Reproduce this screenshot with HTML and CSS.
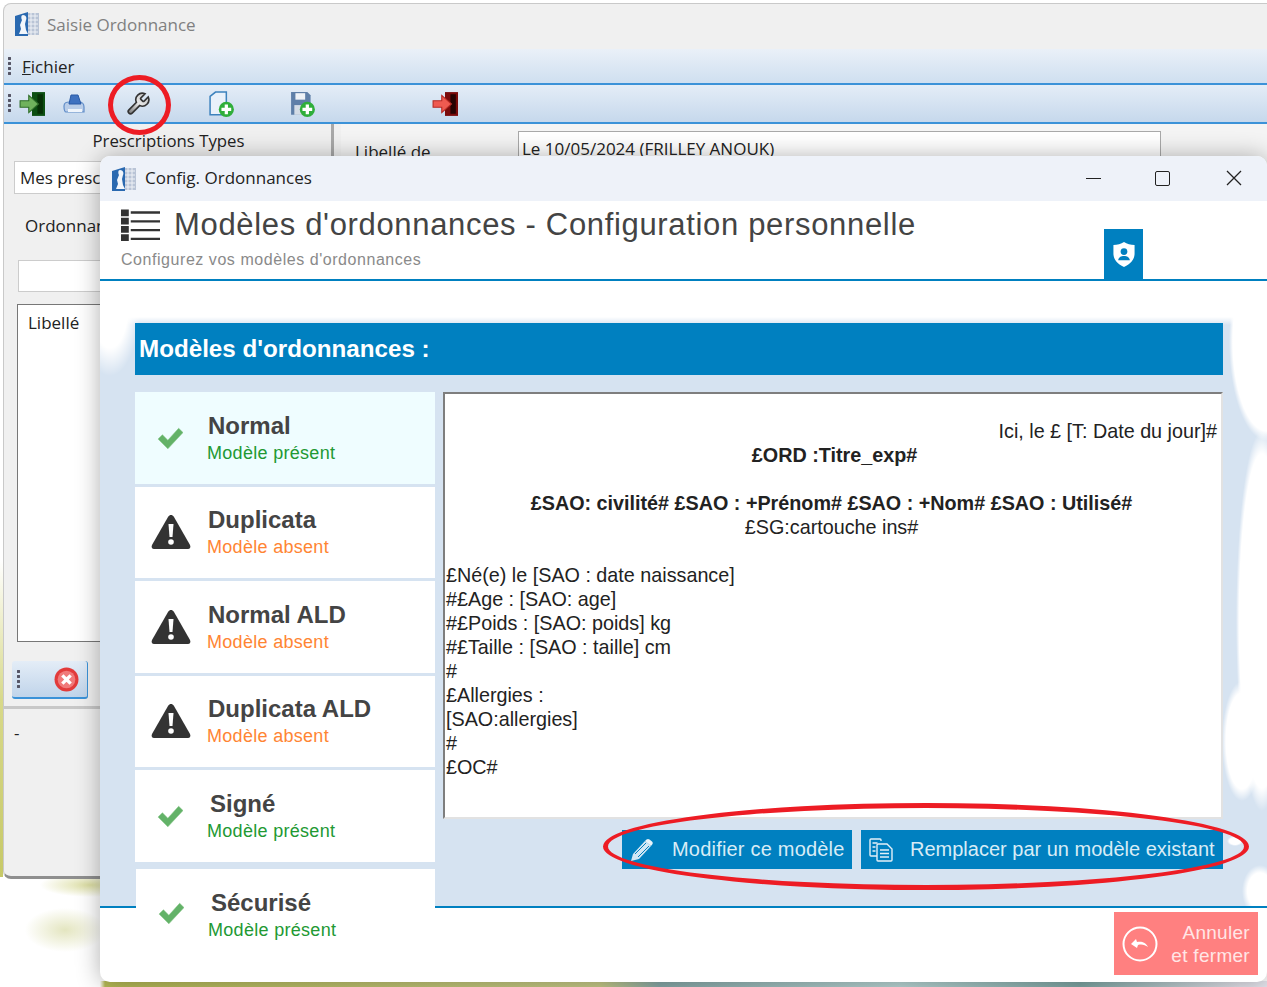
FILE: index.html
```html
<!DOCTYPE html>
<html lang="fr">
<head>
<meta charset="utf-8">
<title>Config. Ordonnances</title>
<link rel="stylesheet" href="styles.css">
</head>
<body>
<svg class="defs" width="0" height="0" aria-hidden="true">
  <defs>
    <linearGradient id="steel" x1="0" y1="1" x2="1" y2="0">
      <stop offset="0" stop-color="#6f6f6f"/>
      <stop offset=".5" stop-color="#e8e8e8"/>
      <stop offset="1" stop-color="#bdbdbd"/>
    </linearGradient>
  </defs>
  <symbol id="app" viewBox="0 0 24 24">
    <rect x="12" y="1" width="12" height="22" fill="#b9c4d6"/>
    <path d="M13 4h10M13 8h10M13 12h10M13 16h10M13 20h10M16 1v22M20 1v22" stroke="#eef1f6" stroke-width="1"/>
    <path d="M0 4 13 0v24H0z" fill="#2a69b0"/>
    <path d="M8 3c3 0 4 3 3 5l-1 4 1 6 2 4H4l2-5-1-4 2-5C6 6 6 3 8 3z" fill="#f2f6fb"/>
  </symbol>
  <symbol id="exit-green" viewBox="0 0 24 24">
    <path d="M12 1h12v22H12z" fill="#0c4f12"/>
    <path d="M17 3h5v18h-5z" fill="#063006"/>
    <path d="M1 9h8V4l9 8-9 8v-5H1z" fill="#6fb25c" stroke="#2f6d2a" stroke-width="1"/>
  </symbol>
  <symbol id="exit-red" viewBox="0 0 24 24">
    <path d="M12 1h12v22H12z" fill="#7a0b0b"/>
    <path d="M17 3h5v18h-5z" fill="#260303"/>
    <path d="M1 9h8V4l9 8-9 8v-5H1z" fill="#ef5a50" stroke="#b52a24" stroke-width="1"/>
  </symbol>
  <symbol id="printer" viewBox="0 0 24 24">
    <path d="M2 14c0-3 3-4 5-4h10c3 0 5 2 5 5v5H4c-1 0-2-2-2-6z" fill="#b9cde8" stroke="#5f8cc8" stroke-width="1.200"/>
    <path d="M7 12 9 3h7l3 9z" fill="#3f72c0" stroke="#2a5aa6"/>
    <path d="M6 17h14v3H6z" fill="#eef4fb"/>
  </symbol>
  <symbol id="wrench" viewBox="0 0 24 24">
    <path d="M14.700 6.300a1 1 0 0 0 0 1.400l1.600 1.600a1 1 0 0 0 1.400 0l3.770-3.770a6 6 0 0 1-7.940 7.940l-6.910 6.910a2.120 2.120 0 0 1-3-3l6.910-6.910a6 6 0 0 1 7.940-7.940l-3.760 3.760z" fill="url(#steel)" stroke="#333" stroke-width="1.500"/>
  </symbol>
  <symbol id="doc-plus" viewBox="0 0 24 24">
    <path d="M1 5 6 1h10v21H1z" fill="#e9f1fa" stroke="#3d82bd" stroke-width="1.400"/>
    <circle cx="16" cy="17" r="7" fill="#2fae3a"/>
    <path d="M16 12.500v9M11.500 17h9" stroke="#fff" stroke-width="3"/>
  </symbol>
  <symbol id="save-plus" viewBox="0 0 24 24">
    <path d="M1 1h15l3 3v18H1z" fill="#5f7fa8"/>
    <path d="M5 2h9v6H5z" fill="#eef2f7"/>
    <path d="M4 13h11v9H4z" fill="#d4dce6"/>
    <circle cx="16" cy="17" r="7" fill="#2fae3a"/>
    <path d="M16 12.500v9M11.500 17h9" stroke="#fff" stroke-width="3"/>
  </symbol>
  <symbol id="check" viewBox="0 0 24 20">
    <path d="M1 11 5 7l5 5L20 1l4 4L10 20z" fill="#63b268" stroke="#7cc17f" stroke-width=".5" stroke-linejoin="round"/>
  </symbol>
  <symbol id="warn" viewBox="0 0 40 36">
    <path d="M20 1c1 0 2 .5 3 2l16 28c1 2 0 4-2 4H3c-2 0-3-2-2-4L17 3c1-1.500 2-2 3-2z" fill="#333"/>
    <path d="M17.500 10h5l-1 13h-3z" fill="#fff"/>
    <circle cx="20" cy="28" r="2.800" fill="#fff"/>
  </symbol>
  <symbol id="pencil" viewBox="0 0 24 24">
    <path d="M1 23l2-7L15 3l6 5L9 21z" fill="#d2e7f4"/>
    <path d="M16.500 1.500c1-.8 2-.8 3 0l2.500 2c1 1 1 2 .2 3L21 8l-6-5z" fill="#e8f3fa"/>
    <path d="M5 16 16 5M8 19 19 8" stroke="#0080c0" stroke-width="1"/>
  </symbol>
  <symbol id="docs" viewBox="0 0 24 24" fill="none" stroke="#e3f0f8" stroke-width="1.400">
    <path d="M12 3V2c0-.6-.5-1-1-1H2c-.6 0-1 .4-1 1v15c0 .6.400 1 1 1h6"/>
    <path d="M8 7c0-.6.400-1 1-1h9l5 5v11c0 .6-.4 1-1 1H9c-.6 0-1-.4-1-1z" fill="#0080c0"/>
    <path d="M3.500 5h5M3.500 9h3M3.500 13h3M11 12h9M11 15.500h9M11 19h9"/>
  </symbol>
  <symbol id="shield" viewBox="0 0 22 26">
    <path d="M11 0c3 2 7 3 11 3v9c0 6-4 11-11 14C4 23 0 18 0 12V3c4 0 8-1 11-3z" fill="#fff"/>
    <circle cx="11" cy="10" r="3.500" fill="#0080c0"/>
    <path d="M5 19c0-3 3-4.500 6-4.500s6 1.500 6 4.500z" fill="#0080c0"/>
  </symbol>
  <symbol id="list" viewBox="0 0 40 34">
    <path d="M0 1h8v7H0zM0 9.500h8v7H0zM0 18h8v7H0zM0 26.500h8v7H0z" fill="#333"/>
    <path d="M10 3h30v2.500H10zM10 12h30v2.500H10zM10 21h30v2.500H10zM10 30h30v2.500H10z" fill="#333"/>
  </symbol>
  <symbol id="undo" viewBox="0 0 36 36">
    <circle cx="18" cy="18" r="16.500" fill="none" stroke="#fff" stroke-width="2"/>
    <path d="M9 18l5-5 1 3c4-1 9 0 11 5-3-2-6-3-10-2l-1 3z" fill="#fff"/>
  </symbol>
  <symbol id="close-red" viewBox="0 0 24 24">
    <circle cx="12" cy="12" r="11.500" fill="#e23b3b"/>
    <circle cx="12" cy="12" r="8.500" fill="#f07a7a"/>
    <path d="M8 8l8 8M16 8l-8 8" stroke="#fff" stroke-width="3.200"/>
  </symbol>
</svg>

<div class="back">
  <div class="back-title">
    <svg class="app-icon"><use href="#app"/></svg>
    <span>Saisie Ordonnance</span>
  </div>
  <div class="menubar"><i class="grip"></i><span><u>F</u>ichier</span></div>
  <div class="toolbar">
    <i class="grip"></i>
    <svg class="tool tool-1"><use href="#exit-green"/></svg>
    <svg class="tool tool-2"><use href="#printer"/></svg>
    <svg class="tool tool-3"><use href="#wrench"/></svg>
    <svg class="tool tool-4"><use href="#doc-plus"/></svg>
    <svg class="tool tool-5"><use href="#save-plus"/></svg>
    <svg class="tool tool-6"><use href="#exit-red"/></svg>
  </div>
  <div class="back-body">
    <div class="pane-left">
      <div class="pane-head">Prescriptions Types</div>
      <div class="select-box">Mes prescriptions</div>
      <div class="tab-label">Ordonnances</div>
      <div class="search-box"></div>
      <div class="list-box">Libellé</div>
      <div class="mini-bar"><i class="grip"></i><svg class="mini-x"><use href="#close-red"/></svg></div>
      <div class="pane-sep"></div>
      <div class="dash">-</div>
    </div>
    <div class="pane-right">
      <span class="lib-label">Libellé de</span>
      <div class="lib-input">Le 10/05/2024 (FRILLEY ANOUK)</div>
    </div>
  </div>
</div>

<div class="dialog">
  <div class="dlg-title">
    <svg class="app-icon"><use href="#app"/></svg>
    <span class="dlg-name">Config. Ordonnances</span>
    <div class="win-btns">
      <span class="win-min"></span>
      <span class="win-max"></span>
      <svg class="win-close" viewBox="0 0 16 16"><path d="M1 1l14 14M15 1 1 15" stroke="#222" stroke-width="1.300"/></svg>
    </div>
  </div>
  <header class="dlg-head">
    <div class="head-main">
      <svg class="head-list"><use href="#list"/></svg>
      <h1>Modèles d'ordonnances - Configuration personnelle</h1>
    </div>
    <p class="head-sub">Configurez vos modèles d'ordonnances</p>
    <div class="shield-tab"><svg class="shield"><use href="#shield"/></svg></div>
  </header>
  <main class="dlg-body">
    <h2 class="band">Modèles d'ordonnances :</h2>
    <div class="columns">
      <ul class="models">
        <li class="model active"><svg class="ico-check"><use href="#check"/></svg><div class="model-text"><strong>Normal</strong><span class="ok">Modèle présent</span></div></li>
        <li class="model"><svg class="ico-warn"><use href="#warn"/></svg><div class="model-text"><strong>Duplicata</strong><span class="ko">Modèle absent</span></div></li>
        <li class="model"><svg class="ico-warn"><use href="#warn"/></svg><div class="model-text"><strong>Normal ALD</strong><span class="ko">Modèle absent</span></div></li>
        <li class="model"><svg class="ico-warn"><use href="#warn"/></svg><div class="model-text"><strong>Duplicata ALD</strong><span class="ko">Modèle absent</span></div></li>
        <li class="model"><svg class="ico-check"><use href="#check"/></svg><div class="model-text"><strong class="nudge">Signé</strong><span class="ok">Modèle présent</span></div></li>
        <li class="model last"><svg class="ico-check"><use href="#check"/></svg><div class="model-text"><strong class="nudge">Sécurisé</strong><span class="ok">Modèle présent</span></div></li>
      </ul>
      <div class="preview-col">
        <div class="preview">
          <p class="right">Ici, le £ [T: Date du jour]#</p>
          <p class="center bold ord">£ORD :Titre_exp#</p>
          <p>&nbsp;</p>
          <p class="center bold">£SAO: civilité# £SAO : +Prénom# £SAO : +Nom# £SAO : Utilisé#</p>
          <p class="center">£SG:cartouche ins#</p>
          <p>&nbsp;</p>
          <p>£Né(e) le [SAO : date naissance]</p>
          <p>#£Age : [SAO: age]</p>
          <p>#£Poids : [SAO: poids] kg</p>
          <p>#£Taille : [SAO : taille] cm</p>
          <p>#</p>
          <p>£Allergies :</p>
          <p>[SAO:allergies]</p>
          <p>#</p>
          <p>£OC#</p>
        </div>
        <div class="actions">
          <button class="act act-edit"><svg class="act-ico"><use href="#pencil"/></svg><span>Modifier ce modèle</span></button>
          <button class="act act-swap"><svg class="act-ico"><use href="#docs"/></svg><span>Remplacer par un modèle existant</span></button>
        </div>
      </div>
    </div>
  </main>
  <footer class="dlg-foot">
    <button class="cancel"><svg class="cancel-ico"><use href="#undo"/></svg><span>Annuler<br>et fermer</span></button>
  </footer>
</div>

<div class="mark mark-circle"></div>
<div class="mark mark-ellipse"></div>
</body>
</html>
```

FILE: styles.css
```css
* { box-sizing: border-box; }
html, body { margin: 0; height: 100%; }
body {
  position: relative;
  width: 1267px;
  height: 987px;
  overflow: hidden;
  font-family: "Liberation Sans", Arial, sans-serif;
  background:
    radial-gradient(ellipse 40px 22px at 65px 930px, rgba(205,208,140,.55), transparent),
    radial-gradient(ellipse 50px 12px at 90px 885px, rgba(195,198,100,.6), transparent),
    linear-gradient(90deg, transparent 100px, #b7bb55 105px, #c9cd8a 600px, #8aa 660px, #bcd9d8 900px, #7fa7a5 1080px, #e6e6ee 1240px) bottom / 100% 6px no-repeat,
    linear-gradient(180deg, #fff 560px, #d8d98a 700px, #c7c968 877px) 0 0 / 3px 877px no-repeat,
    #fff;
}
.defs { position: absolute; }
.grip {
  display: block;
  width: 3px;
  height: 19px;
  background: radial-gradient(circle at 1.500px 1.500px, #556 1.400px, transparent 1.600px) 0 0 / 3px 5px;
}

/* back window */
.back {
  position: absolute;
  left: 3px;
  top: 3px;
  width: 1300px;
  height: 876px;
  display: flex;
  flex-direction: column;
  background: #f0f0f0;
  border-radius: 8px;
  border: 1px solid #c9c9c9;
  border-bottom: 3px solid #8f8f8f;
  font-family: "Open Sans", "Noto Sans", sans-serif;
  color: #222;
}
.back-title {
  height: 45px;
  flex: none;
  display: flex;
  align-items: center;
  gap: 8px;
  padding: 0 0 5px 11px;
  font-size: 17px;
  color: #808080;
}
.app-icon { width: 24px; height: 24px; flex: none; }
.menubar {
  height: 36px;
  flex: none;
  display: flex;
  align-items: center;
  gap: 11px;
  padding-left: 4px;
  font-size: 17px;
  background: linear-gradient(180deg, #eaf0f8, #cfdff0);
  border-bottom: 2px solid #3b92d8;
}
.toolbar {
  height: 39px;
  flex: none;
  display: flex;
  align-items: center;
  padding-left: 4px;
  background: linear-gradient(180deg, #e4edf7, #c6d8ec);
  border-bottom: 2px solid #3b92d8;
}
.tool { width: 26px; height: 26px; flex: none; }
.tool-1 { margin-left: 8px; }
.tool-2 { margin-left: 17px; width: 24px; }
.tool-3 { margin-left: 39px; }
.tool-4 { margin-left: 58px; }
.tool-5 { margin-left: 55px; }
.tool-6 { margin-left: 116px; }
.back-body { flex: 1; display: flex; min-height: 0; }
.pane-left {
  width: 330px;
  flex: none;
  border-right: 3px solid #a8a8a8;
  display: flex;
  flex-direction: column;
  align-items: flex-start;
  padding-left: 10px;
  font-size: 17px;
}
.pane-head { align-self: stretch; text-align: center; padding: 5px 8px 0 0; height: 37px; font-size: 16.800px; white-space: nowrap; }
.select-box { width: 200px; height: 33px; line-height: 31px; background: #fff; border: 1px solid #ccc; padding-left: 5px; white-space: nowrap; }
.tab-label { margin: 20px 0 0 11px; height: 46px; line-height: 23px; white-space: nowrap; }
.search-box { margin-left: 4px; width: 200px; height: 32px; background: #fff; border: 1px solid #ccc; }
.list-box { margin: 12px 0 0 3px; width: 200px; height: 338px; padding: 6px 10px; background: #fff; border: 1px solid #777; }
.mini-bar {
  margin-top: 19px;
  margin-left: -2px;
  width: 76px;
  height: 38px;
  display: flex;
  align-items: center;
  gap: 34px;
  padding-left: 5px;
  background: linear-gradient(180deg, #e4edf7, #c0d4ea);
  border-bottom: 2px solid #3b92d8;
  border-right: 1px solid #3b92d8;
  border-radius: 3px;
}
.mini-x { width: 25px; height: 25px; }
.pane-sep { margin: 7px 0 0 -10px; width: 320px; height: 3px; background: #c8c8c8; }
.dash { margin: 12px 0 0 0; }
.pane-right { flex: 1; padding: 7px 0 0 14px; display: flex; font-size: 17px; background: #f4f4f4; margin-left: 7px; }
.lib-label { width: 163px; padding-top: 9px; }
.lib-input { width: 643px; height: 60px; background: #fff; border: 1px solid #a9a9a9; padding: 5px 3px; }

/* dialog */
.dialog {
  position: absolute;
  left: 100px;
  top: 156px;
  width: 1167px;
  height: 826px;
  display: flex;
  flex-direction: column;
  overflow: hidden;
  background: #fff;
  border-radius: 10px;
  box-shadow: 0 1px 24px rgba(0,0,0,.32);
  color: #333;
}
.dlg-title {
  height: 45px;
  flex: none;
  display: flex;
  align-items: center;
  padding-left: 12px;
  background: #eef2f9;
}
.dlg-name { margin-left: 9px; padding-bottom: 3px; font: 17px "Open Sans", sans-serif; color: #222; }
.win-btns { margin-left: auto; padding: 0 25px 1px 0; display: flex; align-items: center; }
.win-min { width: 15px; height: 1px; background: #222; }
.win-max { width: 15px; height: 15px; border: 1.400px solid #222; border-radius: 2px; margin-left: 54px; }
.win-close { width: 16px; height: 16px; margin-left: 56px; }
.dlg-head { position: relative; flex: none; height: 80px; padding: 0 0 0 21px; border-bottom: 2px solid #0080c0; }
.head-main { display: flex; align-items: center; gap: 14px; height: 48px; }
.head-list { width: 39px; height: 34px; flex: none; }
h1 { margin: 0; font-weight: 400; font-size: 31px; letter-spacing: .67px; color: #444; white-space: nowrap; }
.head-sub { margin: 2px 0 0; font-size: 16px; letter-spacing: .55px; color: #8a8a8a; white-space: nowrap; }
.shield-tab {
  position: absolute;
  left: 1004px;
  bottom: -1px;
  width: 39px;
  height: 51px;
  display: flex;
  align-items: center;
  justify-content: center;
  background: #0080c0;
}
.shield { width: 22px; height: 25px; }
.dlg-body {
  flex: none;
  height: 627px;
  padding: 42px 0 0 35px;
  border-bottom: 2px solid #0080c0;
  background:
    radial-gradient(ellipse 8px 5px at 1135px 560px, #fff 70%, transparent),
    radial-gradient(ellipse 18px 26px at 1160px 610px, #fff 70%, transparent),
    radial-gradient(ellipse 26px 190px at 1162px 340px, #fff 88%, transparent),
    radial-gradient(ellipse 20px 60px at 1142px 460px, #fff 80%, transparent),
    radial-gradient(ellipse 38px 100px at 1167px 60px, #fff 90%, transparent),
    linear-gradient(180deg, #fff 36px, transparent 44px) no-repeat,
    radial-gradient(ellipse 30px 70px at 10px 25px, #fff 60%, transparent),
    #d6e3f1;
}
.band {
  margin: 0;
  width: 1088px;
  height: 52px;
  padding-left: 4px;
  line-height: 51px;
  font-size: 24.200px;
  color: #fff;
  background: #0080c0;
  white-space: nowrap;
}
.columns { display: flex; gap: 8px; margin-top: 17px; align-items: flex-start; }
.models { list-style: none; margin: 0; padding: 0; width: 300px; flex: none; display: flex; flex-direction: column; gap: 3px; }
.model { position: relative; height: 91.500px; background: #fff; display: flex; align-items: center; }
.model.active { background: #effdff; }
.model.last { height: 107px; margin: 4px 0 0 1px; align-items: flex-start; padding-top: 20px; z-index: 1; }
.ico-check { width: 26px; height: 22px; margin-left: 22px; flex: none; }
.ico-warn { width: 40px; height: 36px; margin-left: 16px; flex: none; }
.model-text { display: flex; flex-direction: column; margin-left: 24px; gap: 2px; }
.ico-warn + .model-text { margin-left: 16px; }
.model.last .ico-check { margin-top: 13px; }
.model-text strong { font-size: 24px; line-height: 28px; margin-left: 1px; color: #444; white-space: nowrap; }
.model-text strong.nudge { margin-left: 3px; }
.model-text span { font-size: 18px; line-height: 22px; letter-spacing: .3px; white-space: nowrap; }
.ok { color: #229933; }
.ko { color: #ff8533; }
.preview-col { width: 780px; flex: none; }
.preview {
  height: 427px;
  padding: 25px 4px 0 1px;
  background: #fff;
  border: 2px solid #e2e2e2;
  border-top-color: #7e7e7e;
  border-left-color: #7e7e7e;
  font-size: 19.750px;
  line-height: 24px;
  color: #222;
}
.preview p { margin: 0; white-space: nowrap; }
.right { text-align: right; }
.center { text-align: center; }
.bold { font-weight: 700; }
.preview .ord { padding-left: 6px; }
.actions { display: flex; justify-content: flex-end; gap: 9px; margin-top: 11px; }
.act {
  height: 39px;
  display: flex;
  align-items: center;
  border: 0;
  background: #0080c0;
  color: #d8ecf6;
  font: 20px "Liberation Sans", sans-serif;
  padding: 0 8px;
  white-space: nowrap;
}
.act-ico { width: 24px; height: 24px; flex: none; }
.act-edit { width: 230px; letter-spacing: .2px; }
.act-edit span { margin-left: 18px; }
.act-swap { width: 362px; }
.act-swap span { margin-left: 17px; }
.dlg-foot { flex: 1; display: flex; justify-content: flex-end; padding: 4px 9px 0 0; }
.cancel {
  width: 144px;
  height: 63px;
  display: flex;
  align-items: center;
  justify-content: space-between;
  padding: 0 8px;
  border: 0;
  background: #ff8080;
  color: #ffe6e6;
  font: 19px/23px "Liberation Sans", sans-serif;
  letter-spacing: .3px;
  text-align: right;
}
.cancel-ico { width: 36px; height: 36px; flex: none; }

/* hand-drawn annotations over the screenshot */
.mark { position: absolute; border: 5px solid #ed1c24; border-radius: 50%; pointer-events: none; }
.mark-circle { left: 108px; top: 75px; width: 63px; height: 60px; }
.mark-ellipse { left: 603px; top: 803px; width: 646px; height: 87px; }
```
